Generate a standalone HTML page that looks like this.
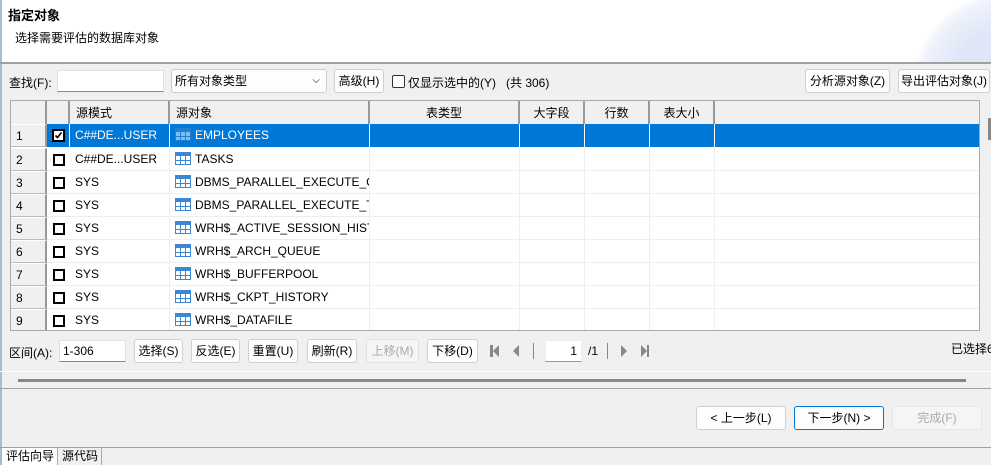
<!DOCTYPE html>
<html><head><meta charset="utf-8"><style>
*{box-sizing:border-box;margin:0;padding:0}
body{width:991px;height:465px;overflow:hidden;background:#f0f0f0;font-family:"Liberation Sans","Noto Sans CJK SC",sans-serif;font-size:12px;color:#000;position:relative}
.a{position:absolute;white-space:nowrap}
.btn{position:absolute;background:#fdfdfd;border:1px solid #d0d0d0;border-radius:3px;text-align:center;line-height:22px;height:24px;font-size:12px}
.inp{position:absolute;background:#fff;border:1px solid #e0e0e0;border-bottom:1px solid #888;height:22px}
.grid{position:absolute;left:10px;top:100px;width:970px;height:231px;background:#fff;border:1px solid #aaa;overflow:hidden}
.hd{position:absolute;top:0;height:24px;background:#f0f0f0;border-right:2px solid #999;border-bottom:1px solid #bbb;text-align:center;line-height:24px}
.row{position:absolute;left:0;width:970px;height:23px;border-bottom:1px solid #eee}
.cell{position:absolute;top:0;height:23px;line-height:23px;border-right:1px solid #eee;white-space:nowrap;overflow:hidden}
.rn{left:0;width:36px;background:#f0f0f0;border-right:2px solid #999;border-bottom:1px solid #bbb;border-top:1px solid #fff;padding-left:5px}
.cb{position:absolute;left:42px;top:6px;width:12px;height:12px;border:2px solid #000;background:#fff}
.sel .cell{background:#0078d7;color:#fff;border-right-color:#fff}
.sel .rn{background:#f0f0f0;color:#000;border-right-color:#999}
svg.t{vertical-align:-2px;margin-right:4px}
</style></head><body>
<svg width="0" height="0" style="position:absolute"><defs><symbol id="tb" viewBox="0 0 16 13"><rect x="0.5" y="0.5" width="15" height="12" fill="#fff" stroke="#3d86d6"/><rect x="0" y="0" width="16" height="4" fill="#3d86d6"/><path d="M0 8.5H16M5.5 4V13M10.5 4V13" stroke="#3d86d6"/></symbol></defs></svg>
<div class="a" style="left:0;top:0;width:991px;height:63px;background:#fff"></div>
<div class="a" style="left:850px;top:0;width:141px;height:63px;background:radial-gradient(circle at 160px 90px,#dfe6f8 60px,#eef2fb 90px,#fff 100px)"></div>
<div class="a" style="left:0;top:0;width:2px;height:465px;background:#a8bcd8"></div>
<div class="a" style="left:8px;top:5px;font-weight:bold;font-size:13px">指定对象</div>
<div class="a" style="left:15px;top:29px">选择需要评估的数据库对象</div>
<div class="a" style="left:0;top:62px;width:991px;height:2px;background:#a0a0a0"></div>

<div class="a" style="left:9px;top:74px">查找(F):</div>
<div class="inp" style="left:57px;top:70px;width:107px"></div>
<div class="a" style="left:171px;top:69px;width:156px;height:24px;background:#fdfdfd;border:1px solid #ccc;border-radius:3px;padding-left:3px;line-height:22px">所有对象类型<span class="a" style="right:6px;top:0;font-size:10px">⌵</span></div>
<div class="btn" style="left:334px;top:69px;width:50px">高级(H)</div>
<div class="a" style="left:392px;top:75px;width:13px;height:13px;border:1px solid #333;border-radius:2px;background:#fff"></div>
<div class="a" style="left:408px;top:74px">仅显示选中的(Y)</div>
<div class="a" style="left:506px;top:74px">(共 306)</div>
<div class="btn" style="left:805px;top:69px;width:85px">分析源对象(Z)</div>
<div class="btn" style="left:898px;top:69px;width:92px">导出评估对象(J)</div>

<div class="grid">
<div class="hd" style="left:0;width:36px"></div>
<div class="hd" style="left:36px;width:23px"></div>
<div class="hd" style="left:59px;width:100px;text-align:left;padding-left:6px">源模式</div>
<div class="hd" style="left:159px;width:200px;text-align:left;padding-left:6px">源对象</div>
<div class="hd" style="left:359px;width:150px">表类型</div>
<div class="hd" style="left:509px;width:65px">大字段</div>
<div class="hd" style="left:574px;width:65px">行数</div>
<div class="hd" style="left:639px;width:65px">表大小</div>
<div class="hd" style="left:704px;width:266px;border-right:none"></div>

<div class="row sel" style="top:23px"><div class="cell rn">1</div><div class="cell" style="left:36px;width:23px"></div><svg class="a" style="left:41px;top:5px" width="13" height="13" viewBox="0 0 13 13"><rect x="1" y="1" width="11" height="11" fill="#fff" stroke="#000" stroke-width="2"/><path d="M3.5 6.5L5.5 8.5L9.5 3.5" stroke="#000" stroke-width="1.6" fill="none"/></svg><div class="cell" style="left:59px;width:100px;padding-left:5px">C##DE...USER</div><div class="cell" style="left:159px;width:200px;padding-left:5px"><svg class="t" width="16" height="13" style="opacity:.5"><use href="#tb"/></svg>EMPLOYEES</div><div class="cell" style="left:359px;width:150px"></div><div class="cell" style="left:509px;width:65px"></div><div class="cell" style="left:574px;width:65px"></div><div class="cell" style="left:639px;width:65px"></div><div class="cell" style="left:704px;width:266px;border:none"></div></div>

<div class="row" style="top:47px"><div class="cell rn">2</div><div class="cb"></div><div class="cell" style="left:59px;width:100px;padding-left:5px">C##DE...USER</div><div class="cell" style="left:159px;width:200px;padding-left:5px"><svg class="t" width="16" height="13"><use href="#tb"/></svg>TASKS</div><div class="cell" style="left:359px;width:150px"></div><div class="cell" style="left:509px;width:65px"></div><div class="cell" style="left:574px;width:65px"></div><div class="cell" style="left:639px;width:65px"></div></div>
<div class="row" style="top:70px"><div class="cell rn">3</div><div class="cb"></div><div class="cell" style="left:59px;width:100px;padding-left:5px">SYS</div><div class="cell" style="left:159px;width:200px;padding-left:5px"><svg class="t" width="16" height="13"><use href="#tb"/></svg>DBMS_PARALLEL_EXECUTE_CHUNKS$</div><div class="cell" style="left:359px;width:150px"></div><div class="cell" style="left:509px;width:65px"></div><div class="cell" style="left:574px;width:65px"></div><div class="cell" style="left:639px;width:65px"></div></div>
<div class="row" style="top:93px"><div class="cell rn">4</div><div class="cb"></div><div class="cell" style="left:59px;width:100px;padding-left:5px">SYS</div><div class="cell" style="left:159px;width:200px;padding-left:5px"><svg class="t" width="16" height="13"><use href="#tb"/></svg>DBMS_PARALLEL_EXECUTE_TASK$</div><div class="cell" style="left:359px;width:150px"></div><div class="cell" style="left:509px;width:65px"></div><div class="cell" style="left:574px;width:65px"></div><div class="cell" style="left:639px;width:65px"></div></div>
<div class="row" style="top:116px"><div class="cell rn">5</div><div class="cb"></div><div class="cell" style="left:59px;width:100px;padding-left:5px">SYS</div><div class="cell" style="left:159px;width:200px;padding-left:5px"><svg class="t" width="16" height="13"><use href="#tb"/></svg>WRH$_ACTIVE_SESSION_HISTORY</div><div class="cell" style="left:359px;width:150px"></div><div class="cell" style="left:509px;width:65px"></div><div class="cell" style="left:574px;width:65px"></div><div class="cell" style="left:639px;width:65px"></div></div>
<div class="row" style="top:139px"><div class="cell rn">6</div><div class="cb"></div><div class="cell" style="left:59px;width:100px;padding-left:5px">SYS</div><div class="cell" style="left:159px;width:200px;padding-left:5px"><svg class="t" width="16" height="13"><use href="#tb"/></svg>WRH$_ARCH_QUEUE</div><div class="cell" style="left:359px;width:150px"></div><div class="cell" style="left:509px;width:65px"></div><div class="cell" style="left:574px;width:65px"></div><div class="cell" style="left:639px;width:65px"></div></div>
<div class="row" style="top:162px"><div class="cell rn">7</div><div class="cb"></div><div class="cell" style="left:59px;width:100px;padding-left:5px">SYS</div><div class="cell" style="left:159px;width:200px;padding-left:5px"><svg class="t" width="16" height="13"><use href="#tb"/></svg>WRH$_BUFFERPOOL</div><div class="cell" style="left:359px;width:150px"></div><div class="cell" style="left:509px;width:65px"></div><div class="cell" style="left:574px;width:65px"></div><div class="cell" style="left:639px;width:65px"></div></div>
<div class="row" style="top:185px"><div class="cell rn">8</div><div class="cb"></div><div class="cell" style="left:59px;width:100px;padding-left:5px">SYS</div><div class="cell" style="left:159px;width:200px;padding-left:5px"><svg class="t" width="16" height="13"><use href="#tb"/></svg>WRH$_CKPT_HISTORY</div><div class="cell" style="left:359px;width:150px"></div><div class="cell" style="left:509px;width:65px"></div><div class="cell" style="left:574px;width:65px"></div><div class="cell" style="left:639px;width:65px"></div></div>
<div class="row" style="top:208px"><div class="cell rn">9</div><div class="cb"></div><div class="cell" style="left:59px;width:100px;padding-left:5px">SYS</div><div class="cell" style="left:159px;width:200px;padding-left:5px"><svg class="t" width="16" height="13"><use href="#tb"/></svg>WRH$_DATAFILE</div><div class="cell" style="left:359px;width:150px"></div><div class="cell" style="left:509px;width:65px"></div><div class="cell" style="left:574px;width:65px"></div><div class="cell" style="left:639px;width:65px"></div></div>
</div>
<div class="a" style="left:981px;top:100px;width:10px;height:231px;background:#f0f0f0"></div>
<div class="a" style="left:988px;top:118px;width:3px;height:22px;background:#888"></div>

<div class="a" style="left:9px;top:344px">区间(A):</div>
<div class="inp" style="left:59px;top:340px;width:67px;padding-left:3px;line-height:20px">1-306</div>
<div class="btn" style="left:134px;top:339px;width:49px">选择(S)</div>
<div class="btn" style="left:191px;top:339px;width:49px">反选(E)</div>
<div class="btn" style="left:248px;top:339px;width:50px">重置(U)</div>
<div class="btn" style="left:307px;top:339px;width:50px">刷新(R)</div>
<div class="btn" style="left:366px;top:339px;width:53px;color:#aaa;background:#f5f5f5;border-color:#e0e0e0">上移(M)</div>
<div class="btn" style="left:427px;top:339px;width:51px">下移(D)</div>
<svg class="a" style="left:489px;top:343px" width="160" height="16" viewBox="0 0 160 16">
<g fill="#888"><rect x="1" y="2" width="3" height="12"/><path d="M4 8L10 2V14Z"/><path d="M24 8L30 2V14Z"/>
<rect x="44" y="0" width="1" height="16"/><rect x="118" y="0" width="1" height="16"/>
<path d="M132 2L138 8L132 14Z"/><path d="M152 2L158 8L152 14Z"/><rect x="158" y="2" width="2" height="12"/></g></svg>
<div class="inp" style="left:545px;top:340px;width:37px;border-color:#eee;border-bottom-color:#999;text-align:right;padding-right:4px;line-height:20px">1</div>
<div class="a" style="left:588px;top:344px">/1</div>
<div class="a" style="left:951px;top:340px">已选择6</div>

<div class="a" style="left:0;top:371px;width:991px;height:1px;background:#fff"></div>
<div class="a" style="left:18px;top:379px;width:948px;height:3px;background:#888"></div>
<div class="a" style="left:0;top:388px;width:991px;height:1px;background:#a0a0a0"></div>

<div class="btn" style="left:696px;top:406px;width:90px">&lt; 上一步(L)</div>
<div class="btn" style="left:794px;top:406px;width:90px;border-color:#0078d7">下一步(N) &gt;</div>
<div class="btn" style="left:892px;top:406px;width:90px;color:#aaa;background:#f5f5f5;border-color:#e6e6e6">完成(F)</div>

<div class="a" style="left:0;top:447px;width:991px;height:1px;background:#a0a0a0"></div>
<div class="a" style="left:2px;top:448px;width:56px;height:17px;background:#fff;border-right:1px solid #aaa;padding-left:4px;line-height:17px">评估向导</div>
<div class="a" style="left:58px;top:448px;width:44px;height:17px;border-right:1px solid #aaa;padding-left:4px;line-height:17px">源代码</div>
</body></html>
